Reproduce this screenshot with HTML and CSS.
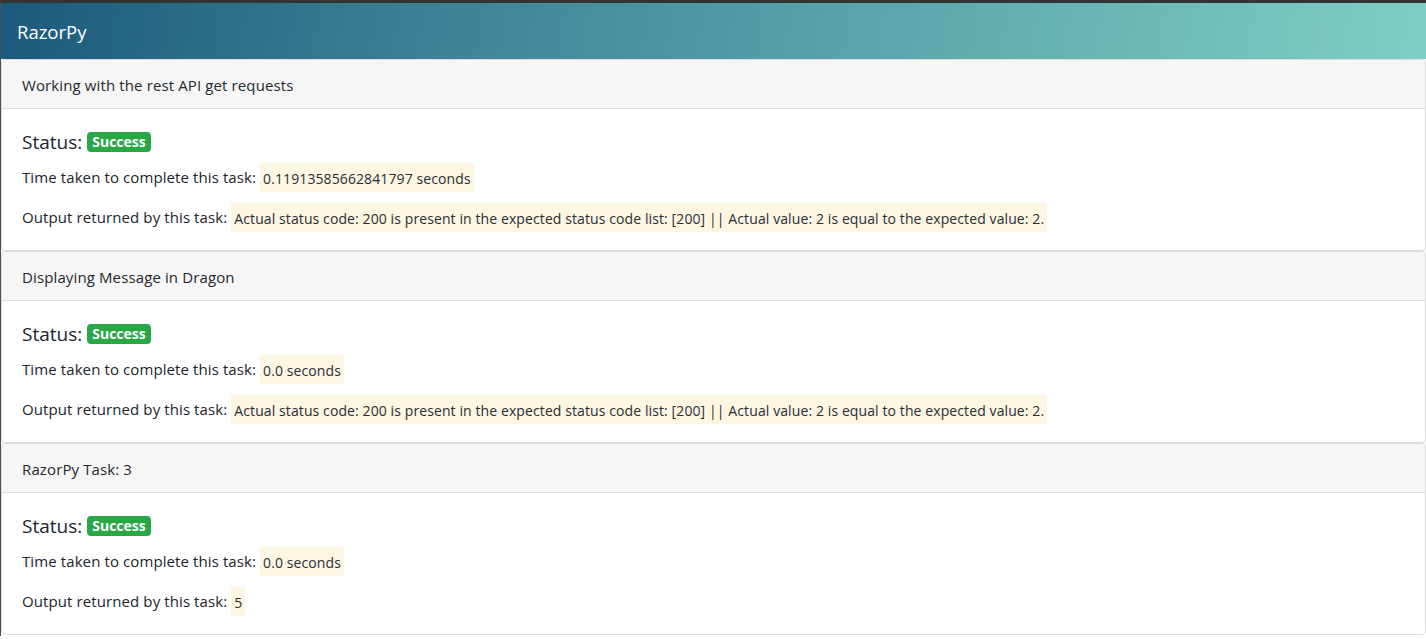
FILE: index.html
```html
<!DOCTYPE html>
<html lang="en">
<head>
<meta charset="utf-8">
<title>RazorPy</title>
<link rel="stylesheet" href="styles.css">
</head>
<body>
<div class="page">
  <nav class="navbar"><span class="brand">RazorPy</span></nav>
  <div class="card">
    <div class="card-header">Working with the rest API get requests</div>
    <div class="card-body">
      <h5 class="status">Status: <span class="badge">Success</span></h5>
      <p class="line">Time taken to complete this task: <span class="mark">0.11913585662841797 seconds</span></p>
      <p class="line">Output returned by this task: <span class="mark">Actual status code: 200 is present in the expected status code list: [200] || Actual value: 2 is equal to the expected value: 2.</span></p>
    </div>
  </div>
  <div class="card">
    <div class="card-header">Displaying Message in Dragon</div>
    <div class="card-body">
      <h5 class="status">Status: <span class="badge">Success</span></h5>
      <p class="line">Time taken to complete this task: <span class="mark">0.0 seconds</span></p>
      <p class="line">Output returned by this task: <span class="mark">Actual status code: 200 is present in the expected status code list: [200] || Actual value: 2 is equal to the expected value: 2.</span></p>
    </div>
  </div>
  <div class="card">
    <div class="card-header">RazorPy Task: 3</div>
    <div class="card-body">
      <h5 class="status">Status: <span class="badge">Success</span></h5>
      <p class="line">Time taken to complete this task: <span class="mark">0.0 seconds</span></p>
      <p class="line">Output returned by this task: <span class="mark">5</span></p>
    </div>
  </div>
</div>
</body>
</html>
```
FILE: styles.css
```css
html, body {
  margin: 0;
  padding: 0;
  background: #ffffff;
}
body {
  font-family: "Open Sans", "Noto Sans", sans-serif;
  color: #212529;
  border-top: 3px solid #333333;
  border-left: 1px solid #4d4d4d;
  min-height: 636px;
  box-sizing: border-box;
}
.navbar {
  height: 56px;
  display: flex;
  align-items: center;
  padding-left: 16px;
  background: linear-gradient(100deg, #1b597d 0%, #3a7e93 28%, #4e9aa3 50%, #7ecfc5 100%);
}
.brand {
  color: #ffffff;
  font-size: 18.5px;
  line-height: 24px;
  padding-top: 2px;
}
.card {
  border: 1px solid #dcdcdc;
  border-radius: 4px;
  background: #ffffff;
}
.card-header {
  background: #f6f6f6;
  border-bottom: 1px solid #dcdcdc;
  padding: 14px 20px 12px;
  font-size: 15px;
  letter-spacing: 0.12px;
  line-height: 22px;
  color: #24292e;
  border-radius: 4px 4px 0 0;
}
.card-body {
  padding: 20px 20px 18px;
}
.status {
  margin: 0 0 10px;
  font-size: 19px;
  font-weight: 400;
  line-height: 24px;
  padding-top: 1px;
  height: 23px;
  display: flex;
  align-items: center;
  gap: 5px;
}
.badge {
  display: inline-block;
  background: #28a745;
  color: #ffffff;
  font-size: 14px;
  font-weight: 700;
  line-height: 20px;
  padding: 0 5px;
  border-radius: 4px;
  margin-top: 1px;
}
.line {
  margin: 0 0 11px;
  font-size: 15px;
  letter-spacing: 0.1px;
  line-height: 29px;
  height: 29px;
}
.line:last-child {
  margin-bottom: 0;
}
.mark {
  display: inline-block;
  vertical-align: top;
  background: #fdf6e3;
  padding: 1px 3px 0;
  height: 29px;
  box-sizing: border-box;
  line-height: 29px;
  font-size: 14px;
  font-weight: 400;
  letter-spacing: 0.1px;
  color: #2a2e33;
}
```
